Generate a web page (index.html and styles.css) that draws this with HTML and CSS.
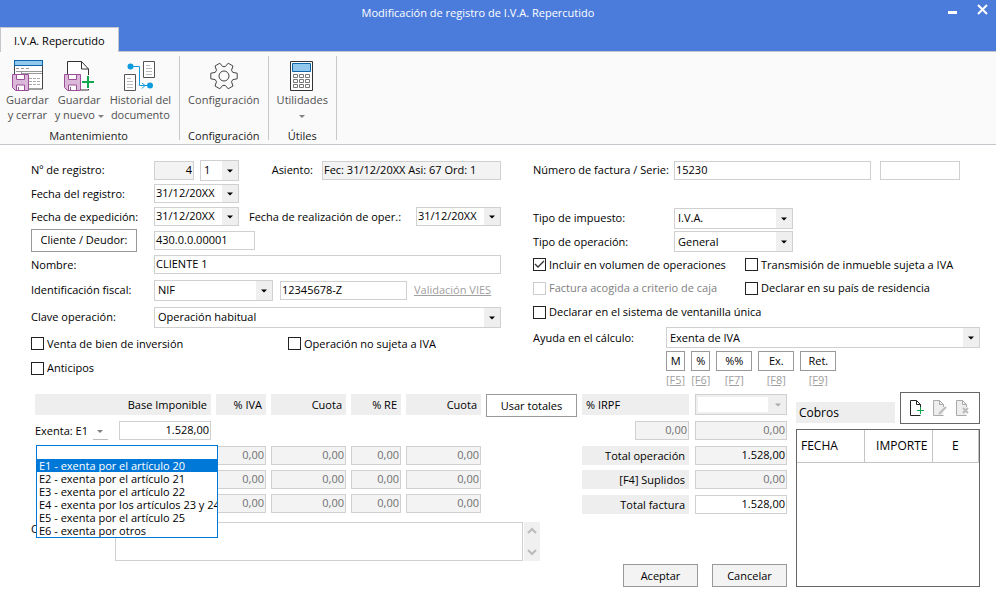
FILE: index.html
```html
<!DOCTYPE html>
<html lang="es">
<head>
    <meta charset="UTF-8">
    <meta name="viewport" content="width=device-width, initial-scale=1.0">
    <title>Modificación de registro de I.V.A. Repercutido</title>
    <link rel="stylesheet" href="styles.css">
</head>
<body>
    <header class="titlebar">
        <h1>Modificación de registro de I.V.A. Repercutido</h1>
        <div class="window-buttons">
            <button type="button" aria-label="Minimizar">
                <svg width="11" height="11" viewBox="0 0 11 11"><path d="M1 8.500h9" stroke="#fff" stroke-width="3"/></svg>
            </button>
            <button type="button" aria-label="Cerrar">
                <svg width="11" height="11" viewBox="0 0 11 11"><path d="M1 1l9 9M10 1l-9 9" stroke="#fff" stroke-width="2"/></svg>
            </button>
        </div>
        <nav class="tabs"><a href="#ribbon" class="tab">I.V.A. Repercutido</a></nav>
    </header>

    <section class="ribbon" id="ribbon">
        <div class="ribbon-group">
            <div class="ribbon-buttons">
                <button type="button">
                    <svg width="32" height="32" viewBox="0 0 32 32" fill="none">
                        <path d="M3.500 1v28h28V1" fill="#fff" stroke="#444"/>
                        <rect x="3.500" y=".5" width="28" height="5" fill="#92c8ee" stroke="#0b63a8"/>
                        <path d="M5 8.500h3m2 0h3m2 0h3M5 11.500h26M10.500 12v4M10 13.500h21" stroke="#999"/>
                        <path d="M18 18.500h3m1 0h3m1 0h3M18 21.500h3m1 0h3m1 0h3M18 24.500h3m1 0h3m1 0h3" stroke="#aaa"/>
                        <path d="M1.500 14.500h16v16h-13l-3-3z" fill="#dbb8da" stroke="#9b4f96"/>
                        <path d="M5.500 14.500h8v5h-8zM5.500 30v-5h8v5" fill="#fff" stroke="#9b4f96"/>
                        <path d="M7.500 27v3" stroke="#9b4f96"/>
                    </svg>
                    <span>Guardar<br>y cerrar</span>
                </button>
                <button type="button">
                    <svg width="32" height="32" viewBox="0 0 32 32" fill="none">
                        <path d="M4.500 15V1.500h14l7 7.500v21H18" fill="#fff" stroke="#333"/>
                        <path d="M18.500 1.500v7.500h7" stroke="#333"/>
                        <path d="M1.500 14.500h16v16h-13l-3-3z" fill="#dbb8da" stroke="#9b4f96"/>
                        <path d="M5.500 14.500h8v5h-8zM5.500 30v-5h8v5" fill="#fff" stroke="#9b4f96"/>
                        <path d="M7.500 27v3" stroke="#9b4f96"/>
                        <path d="M25 15v14M18 22h14" stroke="#fafafa" stroke-width="4"/>
                        <path d="M25 16v12M19 22h12" stroke="#12a84e" stroke-width="2"/>
                    </svg>
                    <span>Guardar<br>y nuevo <i class="caret"></i></span>
                </button>
                <button type="button">
                    <svg width="32" height="32" viewBox="0 0 32 32" fill="none">
                        <path d="M19.500 1.500h11v16h-11zM.5 14.500h11v16H.5z" fill="#fff" stroke="#555"/>
                        <path d="M22 5.500h4M22 8.500h6M22 11.500h6M22 14.500h6M3 18.500h4M3 21.500h6M3 24.500h6M3 27.500h6" stroke="#bbb"/>
                        <path d="M6 6.500h9.500v19H25M18 23l3 2.500-3 3" stroke="#0d9be0"/>
                        <circle cx="6.500" cy="6.500" r="3" fill="#0d9be0"/>
                        <circle cx="26" cy="25.500" r="3" fill="#0d9be0"/>
                    </svg>
                    <span>Historial del<br>documento</span>
                </button>
            </div>
            <h2>Mantenimiento</h2>
        </div>
        <div class="ribbon-group">
            <div class="ribbon-buttons">
                <button type="button">
                    <svg width="32" height="32" viewBox="0 0 32 32" fill="none" stroke="#444" stroke-linejoin="round">
                        <path d="M24.800 12.400L29.200 13.200V18.800L24.800 19.600L23.500 21.800L25 26L20.200 28.800L17.300 25.400H14.700L11.800 28.800L7 26L8.500 21.800L7.200 19.600L2.800 18.800V13.200L7.200 12.400L8.500 10.200L7 6L11.800 3.200L14.700 6.600H17.300L20.200 3.200L25 6L23.500 10.200Z"/>
                        <circle cx="16" cy="16" r="5"/>
                    </svg>
                    <span>Configuración</span>
                </button>
            </div>
            <h2>Configuración</h2>
        </div>
        <div class="ribbon-group">
            <div class="ribbon-buttons">
                <button type="button">
                    <svg width="32" height="32" viewBox="0 0 32 32" fill="none">
                        <path d="M4.500 1.500h22v29h-22z" fill="#fff" stroke="#333"/>
                        <path d="M6.500 3.500h18v8h-18z" fill="#92c8ee" stroke="#0b63a8"/>
                        <path d="M7.500 14.500h4v3h-4zM13.500 14.500h4v3h-4zM19.500 14.500h4v3h-4zM7.500 19.500h4v3h-4zM13.500 19.500h4v3h-4zM19.500 19.500h4v3h-4zM7.500 24.500h4v3h-4zM13.500 24.500h4v3h-4zM19.500 24.500h4v3h-4z" stroke="#777"/>
                    </svg>
                    <span>Utilidades<br><i class="caret"></i></span>
                </button>
            </div>
            <h2>Útiles</h2>
        </div>
    </section>

    <form class="form">
        <div class="upper">
            <div class="fields-left">
                <div class="row">
                    <label class="name" for="registro">Nº de registro:</label>
                    <input class="w-num right" id="registro" value="4" readonly>
                    <select class="w-short" aria-label="Parte"><option>1</option></select>
                    <label class="push" for="asiento">Asiento:</label>
                    <input class="w-entry" id="asiento" value="Fec: 31/12/20XX Asi: 67 Ord: 1" readonly>
                </div>
                <div class="row">
                    <label class="name" for="fecha-registro">Fecha del registro:</label>
                    <select class="date" id="fecha-registro"><option>31/12/20XX</option></select>
                </div>
                <div class="row">
                    <label class="name" for="fecha-expedicion">Fecha de expedición:</label>
                    <select class="date" id="fecha-expedicion"><option>31/12/20XX</option></select>
                    <label class="after-date" for="fecha-oper">Fecha de realización de oper.:</label>
                    <select class="date push" id="fecha-oper"><option>31/12/20XX</option></select>
                </div>
                <div class="row">
                    <div class="name"><button type="button" class="btn btn-client">Cliente / Deudor:</button></div>
                    <input class="w-account" aria-label="Cuenta" value="430.0.0.00001">
                </div>
                <div class="row">
                    <label class="name" for="nombre">Nombre:</label>
                    <input class="grow" id="nombre" value="CLIENTE 1">
                </div>
                <div class="row">
                    <label class="name" for="identificacion">Identificación fiscal:</label>
                    <select class="w-type" id="identificacion"><option>NIF</option></select>
                    <input class="w-nif" aria-label="Número" value="12345678-Z">
                    <a href="#" class="link">Validación VIES</a>
                </div>
                <div class="row">
                    <label class="name" for="clave">Clave operación:</label>
                    <select class="grow" id="clave"><option>Operación habitual</option></select>
                </div>
                <div class="checks-left">
                    <label class="check"><input type="checkbox"> Venta de bien de inversión</label>
                    <label class="check"><input type="checkbox"> Operación no sujeta a IVA</label>
                </div>
                <div class="checks-left">
                    <label class="check"><input type="checkbox"> Anticipos</label>
                </div>
            </div>

            <div class="fields-right">
                <div class="row invoice">
                    <label class="name" for="factura">Número de factura / Serie:</label>
                    <input class="grow" id="factura" value="15230">
                    <input class="w-serie" aria-label="Serie">
                </div>
                <div class="row"></div>
                <div class="row">
                    <label class="name" for="impuesto">Tipo de impuesto:</label>
                    <select class="w-type" id="impuesto"><option>I.V.A.</option></select>
                </div>
                <div class="row">
                    <label class="name" for="operacion">Tipo de operación:</label>
                    <select class="w-type" id="operacion"><option>General</option></select>
                </div>
                <div class="checks-right">
                    <label class="check"><input type="checkbox" checked> Incluir en volumen de operaciones</label>
                    <label class="check"><input type="checkbox"> Transmisión de inmueble sujeta a IVA</label>
                </div>
                <div class="checks-right">
                    <label class="check off"><input type="checkbox" disabled> Factura acogida a criterio de caja</label>
                    <label class="check"><input type="checkbox"> Declarar en su país de residencia</label>
                </div>
                <div class="row">
                    <label class="check"><input type="checkbox"> Declarar en el sistema de ventanilla única</label>
                </div>
                <div class="row help">
                    <label class="name" for="ayuda">Ayuda en el cálculo:</label>
                    <select class="grow" id="ayuda"><option>Exenta de IVA</option></select>
                </div>
                <div class="keys">
                    <div class="key"><button type="button" class="btn btn-key">M</button><a href="#" class="link">[F5]</a></div>
                    <div class="key"><button type="button" class="btn btn-key">%</button><a href="#" class="link">[F6]</a></div>
                    <div class="key"><button type="button" class="btn btn-key wide">%%</button><a href="#" class="link">[F7]</a></div>
                    <div class="key"><button type="button" class="btn btn-key wide">Ex.</button><a href="#" class="link">[F8]</a></div>
                    <div class="key"><button type="button" class="btn btn-key wide">Ret.</button><a href="#" class="link">[F9]</a></div>
                </div>
            </div>
        </div>

        <div class="lower">
            <div class="amounts">
                <div class="amounts-top">
                    <table class="taxes">
                        <thead>
                            <tr>
                                <th class="col-base">Base Imponible</th>
                                <th class="col-rate">% IVA</th>
                                <th>Cuota</th>
                                <th class="col-rate">% RE</th>
                                <th>Cuota</th>
                            </tr>
                        </thead>
                        <tbody>
                            <tr class="exempt">
                                <td>
                                    <div class="base">
                                        <label for="base-exenta">Exenta: E1</label>
                                        <button type="button" class="drop" aria-label="Tipo de exención"><i class="caret"></i></button>
                                        <input class="right" id="base-exenta" value="1.528,00">
                                        <ul class="options" role="listbox">
                                            <li role="option"></li>
                                            <li role="option" class="selected" aria-selected="true">E1 - exenta por el artículo 20</li>
                                            <li role="option">E2 - exenta por el artículo 21</li>
                                            <li role="option">E3 - exenta por el artículo 22</li>
                                            <li role="option">E4 - exenta por los artículos 23 y 24</li>
                                            <li role="option">E5 - exenta por el artículo 25</li>
                                            <li role="option">E6 - exenta por otros</li>
                                        </ul>
                                    </div>
                                </td>
                                <td></td><td></td><td></td><td></td>
                            </tr>
                            <tr>
                                <td></td>
                                <td><input class="right" aria-label="% IVA 1" value="0,00" disabled></td>
                                <td><input class="right" aria-label="Cuota IVA 1" value="0,00" disabled></td>
                                <td><input class="right" aria-label="% RE 1" value="0,00" disabled></td>
                                <td><input class="right" aria-label="Cuota RE 1" value="0,00" disabled></td>
                            </tr>
                            <tr>
                                <td></td>
                                <td><input class="right" aria-label="% IVA 2" value="0,00" disabled></td>
                                <td><input class="right" aria-label="Cuota IVA 2" value="0,00" disabled></td>
                                <td><input class="right" aria-label="% RE 2" value="0,00" disabled></td>
                                <td><input class="right" aria-label="Cuota RE 2" value="0,00" disabled></td>
                            </tr>
                            <tr>
                                <td></td>
                                <td><input class="right" aria-label="% IVA 3" value="0,00" disabled></td>
                                <td><input class="right" aria-label="Cuota IVA 3" value="0,00" disabled></td>
                                <td><input class="right" aria-label="% RE 3" value="0,00" disabled></td>
                                <td><input class="right" aria-label="Cuota RE 3" value="0,00" disabled></td>
                            </tr>
                        </tbody>
                    </table>
                    <button type="button" class="btn btn-totals">Usar totales</button>
                    <div class="totals">
                        <label class="cell cell-irpf" for="irpf">% IRPF</label>
                        <select class="irpf" id="irpf" disabled><option></option></select>
                        <input class="w-irpf right" aria-label="Porcentaje IRPF" value="0,00" disabled>
                        <input class="right" aria-label="Cuota IRPF" value="0,00" disabled>
                        <label class="cell" for="total-operacion">Total operación</label>
                        <input class="right" id="total-operacion" value="1.528,00" readonly>
                        <label class="cell" for="suplidos">[F4] Suplidos</label>
                        <input class="right" id="suplidos" value="0,00" disabled>
                        <label class="cell" for="total-factura">Total factura</label>
                        <input class="right" id="total-factura" value="1.528,00">
                    </div>
                </div>
                <div class="notes">
                    <label for="concepto">Concepto:</label>
                    <textarea id="concepto"></textarea>
                    <div class="scroll">
                        <svg width="10" height="7" viewBox="0 0 10 7"><path d="M1 6l4-4 4 4" fill="none" stroke="#bbb" stroke-width="2"/></svg>
                        <svg width="10" height="7" viewBox="0 0 10 7"><path d="M1 1l4 4 4-4" fill="none" stroke="#bbb" stroke-width="2"/></svg>
                    </div>
                </div>
                <div class="actions">
                    <button type="submit" class="btn">Aceptar</button>
                    <button type="button" class="btn">Cancelar</button>
                </div>
            </div>

            <div class="payments">
                <div class="payments-head">
                    <h2>Cobros</h2>
                    <div class="tools">
                        <button type="button" aria-label="Nuevo">
                            <svg width="16" height="18" viewBox="0 0 16 18" fill="none">
                                <path d="M11.500 8V5.500l-4-4h-6v15h10" stroke="#222"/>
                                <path d="M7.500 1.500v4h4" stroke="#222"/>
                                <path d="M11.500 8v7M8 11.500h7" stroke="#12a84e"/>
                            </svg>
                        </button>
                        <button type="button" aria-label="Modificar" disabled>
                            <svg width="16" height="18" viewBox="0 0 16 18" fill="none">
                                <path d="M11.500 8V5.500l-4-4h-6v15h10" fill="#eee" stroke="#aaa"/>
                                <path d="M7.500 1.500v4h4" stroke="#aaa"/>
                                <path d="M14 8l-7 7" stroke="#bbb" stroke-width="2"/>
                            </svg>
                        </button>
                        <button type="button" aria-label="Eliminar" disabled>
                            <svg width="16" height="18" viewBox="0 0 16 18" fill="none">
                                <path d="M11.500 8V5.500l-4-4h-6v15h10" fill="#eee" stroke="#aaa"/>
                                <path d="M7.500 1.500v4h4" stroke="#aaa"/>
                                <path d="M8 9l5 5M13 9l-5 5" stroke="#bbb" stroke-width="2"/>
                            </svg>
                        </button>
                    </div>
                </div>
                <div class="payments-list">
                    <table>
                        <thead>
                            <tr><th class="fecha">FECHA</th><th class="importe">IMPORTE</th><th class="estado">E</th></tr>
                        </thead>
                    </table>
                </div>
            </div>
        </div>
    </form>
</body>
</html>
```
FILE: styles.css
```css
* {
    box-sizing: border-box;
}
body {
    margin: 0;
    min-height: 100vh;
    background-color: #fff;
    color: #000;
    font-family: "Open Sans", "Noto Sans", sans-serif;
    font-size: 11px;
    line-height: 14px;
}
h1, h2 {
    margin: 0;
    font-weight: normal;
}
button, input, select, textarea {
    margin: 0;
    font: inherit;
    color: inherit;
    border-radius: 0;
}

/* title bar */
.titlebar {
    position: relative;
    display: flex;
    flex-direction: column;
    background-color: #4c7cdb;
    border-bottom: 1px solid #c4c6cc;
}
.titlebar h1 {
    height: 27px;
    padding: 0 80px 0 40px;
    font-size: 11px;
    line-height: 26px;
    color: #fff;
    text-align: center;
}
.window-buttons {
    position: absolute;
    top: 4px;
    right: 8px;
    display: flex;
    gap: 19px;
}
.window-buttons button {
    display: flex;
    padding: 0;
    border: 0;
    background: none;
}
.tabs {
    display: flex;
    margin-bottom: -1px;
}
.tab {
    padding: 0 13px;
    height: 25px;
    line-height: 25px;
    color: #000;
    text-decoration: none;
    background-color: #fafafa;
    border: 1px solid #c4c6cc;
    border-bottom: 0;
}

/* ribbon */
.ribbon {
    display: flex;
    height: 93px;
    padding: 4px 0;
    background-color: #fafafa;
    border-bottom: 1px solid #c4c6cc;
}
.ribbon-group {
    display: flex;
    flex-direction: column;
    justify-content: space-between;
    padding: 4px 5px 0;
    border-right: 1px solid #c8c8c8;
}
.ribbon-group:first-child {
    padding-left: 3px;
}
.ribbon-buttons {
    display: flex;
}
.ribbon-buttons button {
    display: flex;
    flex-direction: column;
    align-items: center;
    padding: 0 3px;
    border: 0;
    background: none;
    color: #505050;
    line-height: 15px;
}
.ribbon-group h2 {
    font-size: 11px;
    line-height: 9px;
    text-align: center;
    color: #222;
}
.caret {
    display: inline-block;
    vertical-align: middle;
    border: 3px solid transparent;
    border-top-color: #808080;
    border-bottom: 0;
}

/* form controls */
.form {
    padding: 13px 16px 12px 31px;
}
input, select, textarea {
    min-width: 0;
    height: 19px;
    padding: 0 1px 2px;
    background-color: #fff;
    border: 1px solid #d0d0d0;
}
input:read-only {
    background-color: #f3f3f3;
}
input:disabled {
    background-color: #f3f3f3;
    color: #707070;
}
.right {
    text-align: right;
}
select {
    height: 21px;
    padding: 0 20px 0 3px;
    appearance: none;
    background-image: url("data:image/svg+xml,%3Csvg xmlns='http://www.w3.org/2000/svg' width='16' height='40'%3E%3Cpath d='M0 0h16v40H0z' fill='%23efefef'/%3E%3Cpath d='M5 19h6l-3 3z'/%3E%3C/svg%3E");
    background-repeat: no-repeat;
    background-position: right center;
}
select.date {
    width: 85px;
    height: 19px;
    padding: 0 18px 2px 1px;
}
.btn {
    height: 23px;
    padding: 0;
    background-color: #fff;
    border: 1px solid #999;
}
.link {
    color: #a0a0a0;
    text-decoration: underline;
}
.check {
    display: flex;
    align-items: center;
    gap: 3px;
    white-space: nowrap;
}
.check input {
    flex: none;
    appearance: none;
    width: 13px;
    height: 13px;
    padding: 0;
    background-color: #fff;
    border: 1px solid #222;
}
.check input:checked {
    background-image: url("data:image/svg+xml,%3Csvg xmlns='http://www.w3.org/2000/svg' width='11' height='11'%3E%3Cpath d='M1 5l3 3 6-6' fill='none' stroke='%23333' stroke-width='1.3'/%3E%3C/svg%3E");
}
.check.off {
    color: #808080;
}
.check.off input {
    border-color: #ccc;
}
.grow {
    flex: 1;
}
.push {
    margin-left: auto;
}

/* upper half */
.upper {
    display: grid;
    grid-template-columns: 470fr 447fr;
    column-gap: 32px;
}
.fields-left {
    display: grid;
    align-content: start;
    grid-template-rows: 24px 23px 23px 24px 25px 26px 28px 25px 24px;
}
.fields-right {
    display: grid;
    align-content: start;
    grid-template-rows: 24px 24px 24px 23px 23px 24px 24px 27px 36px;
}
.row {
    display: flex;
    align-items: center;
    white-space: nowrap;
}
.fields-left .name {
    flex: 0 0 123px;
}
.fields-right .name {
    flex: 0 0 141px;
}
.fields-right .help .name {
    flex-basis: 133px;
}
.invoice {
    gap: 9px;
    padding-right: 20px;
}
.invoice .name {
    margin-right: -9px;
}
.w-num {
    width: 40px;
    margin-right: 6px;
}
.w-short {
    width: 39px;
}
.w-entry {
    width: 179px;
    margin-left: 9px;
}
.w-account {
    width: 101px;
}
.w-type {
    width: 119px;
}
.w-nif {
    width: 127px;
    margin: 0 7px;
}
.w-serie {
    width: 80px;
}
.after-date {
    margin-left: 10px;
}
.btn-client {
    width: 106px;
}
.checks-left {
    display: grid;
    grid-template-columns: 257px 1fr;
}
.checks-right {
    display: grid;
    grid-template-columns: 212px 1fr;
}
.keys {
    display: flex;
    gap: 6px;
    padding-left: 133px;
}
.key {
    display: flex;
    flex-direction: column;
    align-items: center;
    gap: 2px;
}
.btn-key {
    width: 19px;
    height: 21px;
}
.btn-key.wide {
    width: 36px;
}

/* lower half */
.lower {
    display: flex;
    gap: 9px;
    padding-top: 5px;
}
.amounts {
    flex: 1;
    padding-top: 2px;
}
.amounts-top {
    display: flex;
    align-items: flex-start;
    padding-left: 4px;
}
.taxes {
    flex: 1;
    table-layout: fixed;
    border-collapse: separate;
    border-spacing: 5px;
    margin: -5px 0 -5px -5px;
}
.taxes th {
    width: 75px;
    height: 21px;
    padding: 0 4px 0 0;
    text-align: right;
    font-weight: normal;
    background-color: #eee;
}
.taxes .col-base {
    width: 176px;
}
.taxes .col-rate {
    width: 50px;
}
.taxes td {
    height: 19px;
    padding: 0;
}
.taxes td input {
    display: block;
    width: 100%;
}
.taxes .exempt td {
    height: 21px;
}
.base {
    position: relative;
    display: flex;
    align-items: center;
    gap: 5px;
    white-space: nowrap;
}
.taxes .base input {
    width: 92px;
    margin-left: auto;
}
.drop {
    width: 15px;
    height: 18px;
    padding: 0;
    line-height: 14px;
    background: none;
    border: 0;
    border-bottom: 1px solid #bbb;
}
.options {
    position: absolute;
    z-index: 1;
    top: 24px;
    left: 1px;
    width: 182px;
    margin: 0;
    padding: 0;
    list-style: none;
    overflow: hidden;
    background-color: #fff;
    border: 1px solid #0078d7;
}
.options li {
    height: 13px;
    padding-left: 2px;
    line-height: 13px;
}
.options .selected {
    background-color: #0078d7;
    color: #fff;
}
.btn-totals {
    width: 91px;
}
.totals {
    display: grid;
    grid-template-columns: 107px 92px;
    grid-template-rows: 22px 20px 19px 20px 19px;
    gap: 5px 6px;
    align-items: start;
    margin-left: 5px;
}
.cell {
    height: 19px;
    padding: 0 4px;
    line-height: 19px;
    text-align: right;
    background-color: #eee;
}
.cell-irpf {
    height: 21px;
    line-height: 21px;
    text-align: left;
}
.w-irpf {
    width: 54px;
    justify-self: end;
}
.irpf:disabled {
    opacity: 1;
    border: 1px solid #d0d0d0;
    background-color: #fff;
    background-image: url("data:image/svg+xml,%3Csvg xmlns='http://www.w3.org/2000/svg' width='18' height='40'%3E%3Cpath d='M0 0h18v40H0z' fill='%23efefef'/%3E%3Cpath d='M7 19h6l-3 3z' fill='%23aaa'/%3E%3C/svg%3E");
    box-shadow: inset 0 0 0 2px #efefef;
}
.notes {
    display: flex;
    padding-top: 8px;
}
.notes label {
    width: 84px;
}
.notes textarea {
    width: 408px;
    height: 39px;
    resize: none;
    overflow: hidden;
}
.scroll {
    display: flex;
    flex-direction: column;
    justify-content: space-between;
    align-items: center;
    width: 16px;
    margin-left: 1px;
    padding: 5px 0;
    background-color: #f0f0f0;
}
.actions {
    display: flex;
    justify-content: flex-end;
    gap: 14px;
    padding-top: 3px;
}
.actions .btn {
    width: 75px;
    background-color: #f3f3f3;
}

/* payments */
.payments {
    display: flex;
    flex-direction: column;
    gap: 5px;
    width: 184px;
}
.payments-head {
    display: flex;
    align-items: flex-end;
    gap: 5px;
}
.payments-head h2 {
    flex: 1;
    padding: 0 3px;
    margin-bottom: 1px;
    font-size: 12px;
    line-height: 21px;
    background-color: #eee;
}
.tools {
    display: flex;
    align-items: center;
    gap: 7px;
    height: 32px;
    padding: 0 8px;
    border: 1px solid #666;
}
.tools button {
    display: flex;
    padding: 0;
    border: 0;
    background: none;
}
.payments-list {
    flex: 1;
    border: 1px solid #666;
}
.payments-list table {
    width: 100%;
    table-layout: fixed;
    border-collapse: collapse;
}
.payments-list th {
    height: 32px;
    padding: 0 4px;
    font-size: 12px;
    font-weight: normal;
    border-right: 1px solid #c4c4c4;
    border-bottom: 1px solid #c4c4c4;
}
.payments-list .fecha {
    width: 67px;
    text-align: left;
}
.payments-list .importe {
    width: 68px;
    text-align: right;
}
```
